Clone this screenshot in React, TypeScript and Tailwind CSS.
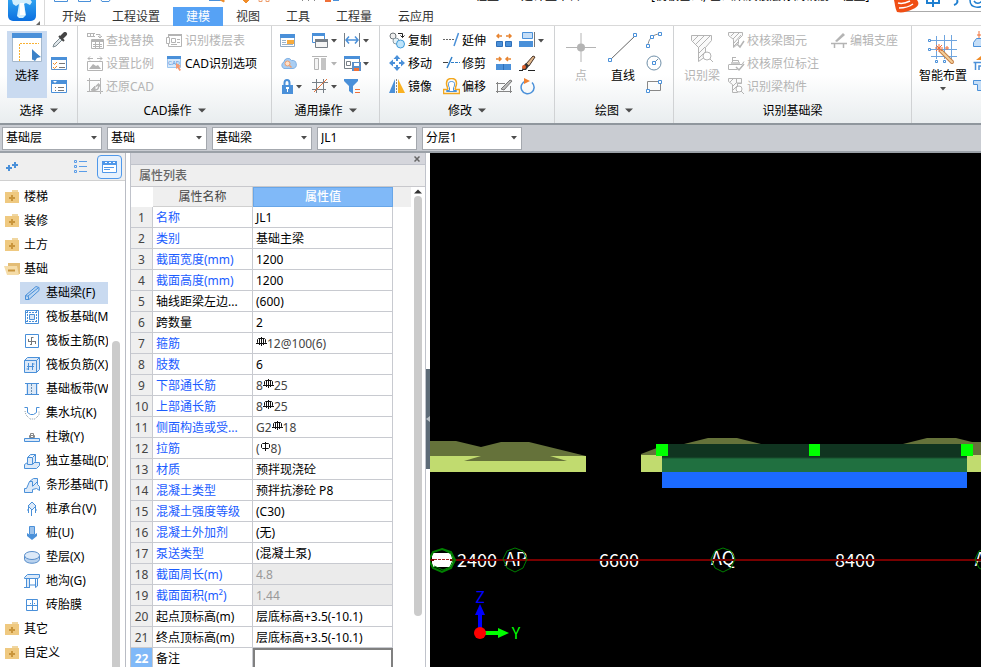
import React from 'react';

interface IconProps {
  children: React.ReactNode;
  w?: number;
  h?: number;
}

const BLUE = '#4a90d9';
const GRAY = '#b4b4b4';
const ORANGE = '#f08c28';

function Icon({ children, w = 17, h = 17 }: IconProps) {
  return (
    <svg width={w} height={h} viewBox={`0 0 ${w} ${h}`} fill="none" className="shrink-0" aria-hidden="true">
      {children}
    </svg>
  );
}

function Caret({ color = '#4d4d4d', big = false }: { color?: string; big?: boolean }) {
  return big ? (
    <svg width="8" height="5" viewBox="0 0 8 5" className="shrink-0" aria-hidden="true">
      <path d="M0 0.5h8L4 4.5z" fill={color} />
    </svg>
  ) : (
    <svg width="6" height="4" viewBox="0 0 6 4" className="shrink-0" aria-hidden="true">
      <path d="M0 0h6L3 3.5z" fill={color} />
    </svg>
  );
}

/* ---------- ribbon icons ---------- */

const icons: Record<string, React.ReactNode> = {
  dropper: (
    <Icon>
      <path d="M2 15L3 12L9 6L11 8L5 14z" fill="#dfe6ea" stroke="#7c8a90" />
      <path d="M8 4L13 9M10 6L14 2" stroke="#454545" strokeWidth="2" />
      <path d="M11 5L14 2" stroke="#454545" strokeWidth="4" strokeLinecap="round" />
    </Icon>
  ),
  checkList: (
    <Icon>
      <path d="M0.5 2.5h15v12h-15z" fill="#fff" stroke="#5a8fcb" />
      <path d="M0 2h16v3H0z" fill={BLUE} />
      <path d="M2 8l1.5 1.5L6 7M2 12l1.5 1.5L6 11" stroke={ORANGE} />
      <path d="M8 8.5h6M8 12.5h6" stroke="#777" />
    </Icon>
  ),
  listPanel: (
    <Icon>
      <path d="M0.5 2.5h15v12h-15z" fill="#fff" stroke={BLUE} />
      <path d="M0 2h16v4H0z" fill={BLUE} />
      <path d="M2 3h4l-2 2z" fill="#fff" />
      <path d="M4 9.5h1M7 9.5h6M4 12.5h1M7 12.5h6" stroke="#777" />
    </Icon>
  ),
  findReplace: (
    <Icon>
      <path d="M0.5 1v4M3.5 1v4M6.5 1v4M0 1.5h8M0 4.5h8" stroke={GRAY} />
      <path d="M9 2.5h4v3M11 4l2 2 2-2" stroke={GRAY} />
      <path d="M4.5 7.5h12v9h-12z" fill="#fff" stroke={GRAY} />
      <path d="M5 8h11v2H5z" fill={GRAY} />
      <path d="M6 12.5h9M6 14.500h9" stroke={GRAY} />
      <path d="M8.500 10v6M12.500 10v6" stroke={GRAY} />
    </Icon>
  ),
  scale: (
    <Icon>
      <path d="M1 3.500h5M3 1.500l-2 2 2 2M10 3.500h5M13 1.500l2 2-2 2" stroke={GRAY} />
      <path d="M0.500 6.500h15v9h-15z" fill="#fff" stroke={GRAY} />
      <path d="M2 14l4-5 3 2 2-1 3 4z" fill={GRAY} />
    </Icon>
  ),
  restore: (
    <Icon>
      <path d="M2.500 2.500h11v11h-11zM0 2.500h3M2.500 0v3M13.500 0v3M14 13.500h2M13.500 14v2M0 13.500h3" stroke={GRAY} />
      <path d="M8 12c3 0 4-2 3.500-5.500M9 8.500l2.500-2.500 2 2.500" stroke={GRAY} strokeWidth="1.500" />
      <path d="M4 12l4-4v5z" fill={GRAY} stroke={GRAY} />
    </Icon>
  ),
  floorTable: (
    <Icon>
      <path d="M2.500 2.500h13v12h-13z" fill="#fff" stroke={GRAY} />
      <path d="M2 2h14v2H2z" fill={GRAY} />
      <path d="M0.500 5.500h3v6h-3zM5.500 6.500h4v4h-4z" fill="#fff" stroke={GRAY} />
      <path d="M11 7.500h3M11 10.500h3M5 12.500h6" stroke={GRAY} />
    </Icon>
  ),
  cadOption: (
    <Icon>
      <path d="M1.500 1.500h13v11h-13z" fill="#d7e9fb" stroke="#9cc6f0" />
      <path d="M1 1h14v3H1z" fill={BLUE} />
      <text x="2" y="10" fontSize="6" fill={BLUE} fontFamily="Roboto, sans-serif">CAD</text>
      <path d="M10 8l5 3-2 1 2 3-1.500 1-2-3-1.500 1z" fill="#f59a73" />
    </Icon>
  ),
  formPanel: (
    <Icon>
      <path d="M0.500 2.500h14v12h-14z" fill="#fff" stroke="#8fa9c4" />
      <path d="M0 2h15v4H0z" fill={BLUE} />
      <path d="M2 8.500h4M2 10.500h4M2 12.500h11M8 8.500h5" stroke="#9cb3c9" />
      <path d="M7 8h7v4H7z" fill="#f8ab3c" />
    </Icon>
  ),
  cloud: (
    <Icon>
      <path d="M4 13.500a3.500 3.500 0 010-6.500 4 4 0 017.500-1.500 4 4 0 011.500 8z" fill="#a9cdf2" stroke="#7fb0e4" />
      <circle cx="7.500" cy="8.500" r="2.500" fill="#ffe1c9" stroke="#ee9d6c" />
      <path d="M9.500 10.500l2 2" stroke="#ee9d6c" strokeWidth="1.500" />
    </Icon>
  ),
  lock: (
    <Icon w={14}>
      <path d="M4.500 8V5a2.500 3 0 015 0v3" stroke={BLUE} strokeWidth="2" />
      <path d="M2 7h11v9H2z" fill={BLUE} />
      <path d="M7 10h1v4H7z" fill="#fff" />
      <path d="M6 9h3v2H6z" fill="#fff" />
    </Icon>
  ),
  windows: (
    <Icon>
      <path d="M0.500 1.500h12v9h-12z" fill="#fff" stroke={BLUE} />
      <path d="M0 1h13v3H0z" fill={BLUE} />
      <path d="M3.500 7.500h12v8h-12z" fill="#f5f5f5" stroke="#777f87" />
      <path d="M3 7h13v3H3z" fill="#777f87" />
    </Icon>
  ),
  alignTop: (
    <Icon>
      <path d="M0 1.500h15" stroke={GRAY} />
      <path d="M2.500 3.500h4v11h-4z" fill="#f4f4f4" stroke={GRAY} />
      <path d="M9 3h5v12H9z" fill="#c4c4c4" />
    </Icon>
  ),
  gridOff: (
    <Icon>
      <path d="M0 4.500h16M0 11.500h14M4.500 1v14M11.500 1v14" stroke="#777f87" />
      <path d="M2 14L15 1" stroke="#e8753a" />
    </Icon>
  ),
  measure: (
    <Icon>
      <path d="M0.500 1v14M15.500 1v14" stroke="#777f87" />
      <path d="M2 8h12M5 4.500L2 8l3 3.500M11 4.500L14 8l-3 3.500" stroke={BLUE} strokeWidth="1.500" />
    </Icon>
  ),
  savePanel: (
    <Icon>
      <path d="M0.500 1.500h15v12h-15z" fill="#fff" stroke="#777f87" />
      <path d="M0 1h16v3H0z" fill={BLUE} />
      <path d="M2.500 6.500h4v4h-4z" stroke="#777f87" />
      <path d="M8 7h9v9H8z" fill="#5a8fcb" />
      <path d="M10 8h5v3h-5z" fill="#fff" />
      <path d="M10 13h5v3h-5z" fill="#f07038" />
    </Icon>
  ),
  filter: (
    <Icon>
      <path d="M0 1h14v2L9 8v8l-4-3V8L0 3z" fill={BLUE} />
      <path d="M11 11.500h5M11 14.500h5" stroke="#f07038" />
    </Icon>
  ),
  copy: (
    <Icon>
      <circle cx="4" cy="4" r="3" fill="#eee" stroke="#6d7478" />
      <circle cx="7" cy="9" r="3" fill="#e6f2f8" stroke="#8a9ba4" />
      <circle cx="11.500" cy="12" r="4" fill="#bfe4fa" stroke="#3f9bd8" />
      <path d="M9 1.500h4.500v4M11.500 3.500l2 2 2-2" stroke="#222" />
    </Icon>
  ),
  move: (
    <Icon>
      <path d="M8 0l3.500 4h-7zM8 16l3.500-4h-7zM0 8l4-3.500v7zM16 8l-4-3.500v7z" fill={BLUE} />
      <path d="M8 3v3M8 10v3M3 8h3M10 8h3" stroke={BLUE} strokeWidth="2" />
    </Icon>
  ),
  mirror: (
    <Icon>
      <path d="M6 1v14H0z" fill={BLUE} />
      <path d="M9 1v14h7z" fill="#f9b122" />
      <path d="M7.500 1v14" stroke="#888" strokeDasharray="2 1" />
    </Icon>
  ),
  extend: (
    <Icon>
      <path d="M15.500 1L11 14" stroke={BLUE} strokeWidth="1.500" />
      <path d="M0 7.500h12" stroke="#666" strokeDasharray="2 1" />
    </Icon>
  ),
  trim: (
    <Icon>
      <path d="M9 2L4 13" stroke="#2f7fc8" strokeWidth="1.500" />
      <path d="M0 7.500h5" stroke="#444" />
      <path d="M8 7.500h9" stroke="#2f7fc8" strokeDasharray="3 1" />
    </Icon>
  ),
  offset: (
    <Icon>
      <path d="M0.500 15.500h16v-4h-4c-1-1 1-3 1-6 0-3-2-5-5-5s-5 2-5 5c0 3 2 5 1 6h-4z" stroke="#f2a71e" strokeWidth="1.500" />
      <path d="M3.500 13.500h10v-1h-3v-3c1-1 1-2 1-4 0-1-1-2-3-2s-3 1-3 2c0 2 0 3 1 4v3h-3z" fill="#fff" stroke={BLUE} />
    </Icon>
  ),
  breakOut: (
    <Icon>
      <path d="M0.500 9.500h6v5h-6zM9.500 9.500h6v5h-6z" fill={BLUE} stroke="#2f6fb8" />
      <path d="M1 4h5M3 2L1 4l2 2M10 4h5M13 2l2 2-2 2" stroke="#e88430" strokeWidth="1.500" />
    </Icon>
  ),
  merge: (
    <Icon>
      <path d="M0 9h15v6H0z" fill={BLUE} />
      <path d="M7.500 9v6" stroke="#2f6fb8" />
      <path d="M0 4h5M3 2l2 2-2 2M10 4h5M12 2l-2 2 2 2" stroke="#e88430" strokeWidth="1.500" />
    </Icon>
  ),
  edit: (
    <Icon>
      <path d="M0 5.500h9M0 13.500h16M1.500 4v11M14.500 8v7" stroke="#858585" />
      <path d="M5 11L14 2l2 1-8 9z" fill="#bbb" stroke="#777" />
    </Icon>
  ),
  align: (
    <Icon>
      <path d="M3.500 0.500h10v6h-10z" fill="#c5def7" stroke={BLUE} />
      <path d="M0 9h14v6H0z" fill={BLUE} />
      <path d="M15.500 0v15" stroke="#777" />
    </Icon>
  ),
  brush: (
    <Icon>
      <path d="M7 9L14 1l2 1-6 9z" fill="#e2b88c" stroke="#4a3428" />
      <path d="M7 8l3 3-3 4H3l1-4z" fill="#333" />
      <circle cx="5" cy="12" r="2" fill="#e0602c" />
      <path d="M0 15.500h4M9 15.500h7" stroke="#222" />
    </Icon>
  ),
  rotate: (
    <Icon>
      <path d="M7 3a6.500 6.500 0 106 1.500" stroke={BLUE} strokeWidth="1.500" />
      <path d="M5 0l6 3-6 3z" fill="#f08030" />
    </Icon>
  ),
  arc: (
    <Icon>
      <path d="M2 14C2 7 7 2 14 2" stroke="#888" />
      <path d="M0.500 12.500h3v3h-3zM4.500 3.500h3v3h-3zM12.500 0.500h3v3h-3z" fill="#fff" stroke={BLUE} />
    </Icon>
  ),
  circle: (
    <Icon>
      <circle cx="8" cy="8" r="7" stroke="#6f8fa8" />
      <path d="M8 8l4-4" stroke="#6f8fa8" />
      <path d="M6.500 6.500h3v3h-3z" fill="#fff" stroke={BLUE} />
    </Icon>
  ),
  rect: (
    <Icon>
      <path d="M1.500 3.500h13v9h-13z" stroke="#888" />
      <path d="M0.500 11.500h3v3h-3zM12.500 2.500h3v3h-3z" fill="#fff" stroke={BLUE} />
    </Icon>
  ),
  checkBeam: (
    <Icon>
      <path d="M0.500 0.500h14v3l-4 4v4l-5 4V7.500l-5-4z" fill="#fafafa" stroke={GRAY} />
      <path d="M3 4l3-3M5 7l6-6M6 11l7-8M6 14l4-4" stroke={GRAY} />
      <path d="M9 12l3 3 4-6" stroke={GRAY} strokeWidth="1.500" />
    </Icon>
  ),
  checkLabel: (
    <Icon>
      <path d="M1 9.500h13l2-3M0.500 9.500v5h9M4.500 9V2M4.500 5.500h6v4M4 2.500h4" stroke={GRAY} />
      <path d="M3 7h9v2H3z" fill="#ccc" />
      <path d="M8 12l3 3 5-6" stroke={GRAY} strokeWidth="1.500" />
    </Icon>
  ),
  beamPart: (
    <Icon>
      <path d="M0.500 0.500h13v5h-4v9h-5v-8l-4-3z" fill="#fafafa" stroke={GRAY} />
      <path d="M2 4l3-3M5 8l4-4M5 12l4-4M8.500 1v4h5" stroke={GRAY} />
      <circle cx="11" cy="11" r="3" fill="#fff" stroke={GRAY} />
      <path d="M13 13l3 3" stroke={GRAY} />
    </Icon>
  ),
  support: (
    <Icon>
      <path d="M4 9l8-8 2 2-8 7z" fill={GRAY} />
      <path d="M0 11.500h16M3.500 12v4M12.500 12v4" stroke={GRAY} strokeWidth="1.500" />
    </Icon>
  ),
};

interface ToolProps {
  icon: string;
  label?: string;
  name?: string;
  disabled?: boolean;
  caret?: boolean;
}

function Tool({ icon, label, name, disabled = false, caret = false }: ToolProps) {
  return (
    <button
      type="button"
      aria-label={label ?? name}
      disabled={disabled}
      className={`flex h-[23px] items-center gap-0.5 whitespace-nowrap ${disabled ? 'text-[#b4b4b4]' : 'text-black'}`}
    >
      {icons[icon]}
      {label}
      {caret && <Caret color={disabled ? '#b4b4b4' : '#4d4d4d'} />}
    </button>
  );
}

interface GroupProps {
  title: string;
  width: string;
  caret?: boolean;
  children: React.ReactNode;
}

function Group({ title, width, caret = true, children }: GroupProps) {
  return (
    <section className={`flex shrink-0 flex-col border-r border-[#d0d2d4] pt-[3px] ${width}`}>
      <div className="flex h-[69px]">{children}</div>
      <button type="button" className="flex h-[26px] items-center justify-center gap-1.5">
        {title}
        {caret && <Caret big />}
      </button>
    </section>
  );
}

const tabs = ['开始', '工程设置', '建模', '视图', '工具', '工程量', '云应用'];

function Header() {
  return (
    <header className="relative flex h-[26px] shrink-0 overflow-hidden bg-white">
      <div className="relative w-[45px] shrink-0 border-r border-b border-[#d9d9d9]">
        <svg width="44" height="26" viewBox="0 0 44 26" aria-hidden="true">
          <defs>
            <linearGradient id="logo" x1="0" y1="0" x2="0" y2="1">
              <stop offset="0" stopColor="#3db4f5" />
              <stop offset="1" stopColor="#0b6fe0" />
            </linearGradient>
          </defs>
          <rect x="8" y="-8" width="28" height="29" rx="5" fill="url(#logo)" />
          <path d="M12 0l5-2h12l3 4-2 3-4-2-2 1 2 11-3 3h-4l-2-2 2-12-3 2-3-2z" fill="#d3effd" />
          <path d="M20 3h4l1 12h-5z" fill="#fff" />
          <path d="M40 21v4h-4z" fill="#666" />
        </svg>
      </div>
      <div className="flex flex-1 flex-col border-b border-[#d9d9d9]">
        <div className="flex h-[7px] shrink-0 items-start overflow-hidden text-xs leading-none text-black">
          <svg width="310" height="4" viewBox="0 0 310 4" aria-hidden="true" fill="none">
            <path d="M9.500 0v1.500h13V0M33.500 0v1.500h12V0M56 0l1 1.500h7L65 0" stroke={BLUE} />
            <path d="M164 0h13v1h-13z" fill={BLUE} />
            <path d="M175 0l4 2V0M198 0l3 3 3-3" fill={ORANGE} stroke={ORANGE} />
            <path d="M214 0v1.500h3V0M221 0v1.500h3V0" stroke="#ee9d6c" />
            <path d="M257.500 0v1M263.500 0v1M269.500 0v1" stroke="#888" />
            <path d="M280 0h6v2h-6z" fill="#f07038" />
            <path d="M288 0h6v1h-6z" fill={BLUE} />
          </svg>
          <span className="-mt-2.5 ml-[108px] whitespace-nowrap">工程量 - 土建计量平台</span>
          <span className="-mt-2.5 ml-[70px] whitespace-nowrap">[筏板基础, 基础梁及楼层标高钢筋工程量]</span>
        </div>
        <nav className="flex flex-1 pl-1">
          {tabs.map((tab) => (
            <button
              key={tab}
              type="button"
              className={`px-[13px] pt-px leading-[18px] ${tab === '建模' ? 'bg-[#56a2f5] text-white' : 'text-[#333]'}`}
            >
              {tab}
            </button>
          ))}
        </nav>
      </div>
      {/* Floating input-method bar */}
      <svg className="absolute top-0 right-0" width="88" height="14" viewBox="0 0 88 14" fill="none" aria-hidden="true">
        <path d="M6 11.500h82" stroke="#aaa" />
        <path d="M1 0h23c3 4 1 7-4 9-6 3-11 4-16 3C2 8 2 4 1 0z" fill="#f04e14" />
        <path d="M5 3c4 1 8 0 12-2M6 8c5 0 10-1 14-4" stroke="#fff" strokeWidth="1.500" />
        <path d="M34 0v3h12V0M40 0v7" stroke="#1e7fd0" strokeWidth="2" />
        <path d="M64 0c1 2 0 4-3 5" stroke="#1e7fd0" strokeWidth="2" />
        <path d="M77 0c0 9 11 9 16 3M81 1c2 3 5 3 8 0" stroke="#1e7fd0" strokeWidth="1.500" />
      </svg>
    </header>
  );
}

function Ribbon() {
  return (
    <div className="flex h-[97px] shrink-0 overflow-hidden bg-linear-to-b from-white from-50% to-[#e9edef]">
      <Group title="选择" width="w-[78px]">
        <button type="button" className="ml-[7px] mt-0.5 flex h-[67px] w-10 flex-col items-center gap-[3px] bg-[#c9daf0]">
          <Icon w={30} h={34}>
            <path d="M0.500 3.500h29v27h-29z" fill="#fff" stroke="#a5b8cc" />
            <path d="M0 2h30v5H0z" fill={BLUE} />
            <path d="M7.500 30V12.500H27" stroke="#f8b133" strokeDasharray="2 1" />
            <path d="M20 19l9 7-4 1-2 3-3-2z" fill="#3b82c8" />
            <path d="M20 18v11l3-3h5z" fill="#3b82c8" />
          </Icon>
          选择
        </button>
        <div className="ml-1">
          <Tool icon="dropper" name="拾取" />
          <Tool icon="checkList" name="批量选择" />
          <Tool icon="listPanel" name="按属性选择" />
        </div>
      </Group>
      <Group title="CAD操作" width="w-[194px]">
        <div className="ml-[9px]">
          <Tool icon="findReplace" label="查找替换" disabled />
          <Tool icon="scale" label="设置比例" disabled />
          <Tool icon="restore" label="还原CAD" disabled />
        </div>
        <div className="ml-3">
          <Tool icon="floorTable" label="识别楼层表" disabled />
          <Tool icon="cadOption" label="CAD识别选项" />
        </div>
      </Group>
      <Group title="通用操作" width="w-[108px]">
        <div className="ml-2 w-8">
          <Tool icon="formPanel" name="图元存盘" />
          <Tool icon="cloud" name="云检查" />
          <Tool icon="lock" name="锁定" caret />
        </div>
        <div className="w-8">
          <Tool icon="windows" name="复制到其它层" caret />
          <Tool icon="alignTop" name="对齐" disabled caret />
          <Tool icon="gridOff" name="辅轴" caret />
        </div>
        <div>
          <Tool icon="measure" name="长度标注" caret />
          <Tool icon="savePanel" name="保存" caret />
          <Tool icon="filter" name="过滤" />
        </div>
      </Group>
      <Group title="修改" width="w-[175px]">
        <div className="ml-[9px] w-[54px]">
          <Tool icon="copy" label="复制" />
          <Tool icon="move" label="移动" />
          <Tool icon="mirror" label="镜像" />
        </div>
        <div className="w-[53px]">
          <Tool icon="extend" label="延伸" />
          <Tool icon="trim" label="修剪" />
          <Tool icon="offset" label="偏移" />
        </div>
        <div className="w-[23px]">
          <Tool icon="breakOut" name="打断" />
          <Tool icon="merge" name="合并" />
          <Tool icon="edit" name="分割" />
        </div>
        <div>
          <Tool icon="align" name="对齐图元" caret />
          <Tool icon="brush" name="格式刷" />
          <Tool icon="rotate" name="旋转" />
        </div>
      </Group>
      <Group title="绘图" width="w-[119px]">
        <button type="button" disabled className="ml-[11px] mt-0.5 flex h-[67px] w-[30px] flex-col items-center gap-[3px] text-[#b4b4b4]">
          <Icon w={30} h={34}>
            <path d="M15 2v29M0 16.500h30" stroke={GRAY} />
            <circle cx="15" cy="16.500" r="4" fill={GRAY} />
          </Icon>
          点
        </button>
        <button type="button" className="ml-3 mt-0.5 flex h-[67px] w-[30px] flex-col items-center gap-[3px]">
          <Icon w={30} h={34}>
            <path d="M2 29L28 4" stroke="#666" />
            <path d="M0.500 27.500h3v3h-3zM25.500 2.500h3v3h-3z" fill="#fff" stroke={BLUE} />
          </Icon>
          直线
        </button>
        <div className="ml-2">
          <Tool icon="arc" name="弧线" />
          <Tool icon="circle" name="圆" />
          <Tool icon="rect" name="矩形" />
        </div>
      </Group>
      <Group title="识别基础梁" width="w-[238px]" caret={false}>
        <button type="button" disabled className="ml-2.5 mt-0.5 flex h-[67px] w-9 flex-col items-center gap-[3px] text-[#b4b4b4]">
          <Icon w={26} h={34}>
            <path d="M2.500 4.500h20v5l-6 7v9l-7 5v-14l-7-7z" fill="#fafafa" stroke={GRAY} />
            <path d="M4 10l5-5M7 13l8-8M9 17L21 5M10 22l6-6M10 27l6-6" stroke={GRAY} />
            <circle cx="18" cy="25" r="4" fill="#fff" stroke={GRAY} />
            <path d="M21 28l3 3" stroke={GRAY} />
          </Icon>
          识别梁
        </button>
        <div className="ml-2">
          <Tool icon="checkBeam" label="校核梁图元" disabled />
          <Tool icon="checkLabel" label="校核原位标注" disabled />
          <Tool icon="beamPart" label="识别梁构件" disabled />
        </div>
        <div className="ml-3">
          <Tool icon="support" label="编辑支座" disabled />
        </div>
      </Group>
      <section className="flex flex-1 pt-[5px]">
        <button type="button" className="ml-[7px] flex h-[67px] w-12 shrink-0 flex-col items-center gap-[3px]">
          <Icon w={32} h={34}>
            <path d="M4 9.500h26M4 18.500h26M4 25.500h26M9.500 28V5M17.500 28V4M24.500 28V4" stroke="#6fa5df" />
            <path d="M1.500 8.500h2v2h-2zM1.500 17.500h2v2h-2zM8.500 29.500h2v2h-2zM16.500 29.500h2v2h-2z" fill="#fff" stroke={BLUE} />
            <path d="M14 20l11 11" stroke="#c58047" strokeWidth="4" strokeLinecap="round" />
            <path d="M14 20l11 11" stroke="#f5cf9a" strokeWidth="2" strokeLinecap="round" />
            <path d="M12 13v8M8 17h8M9 14l6 6M15 14l-6 6M20 15v4M18 17h4" stroke="#f07038" />
          </Icon>
          <span className="whitespace-nowrap">智能布置</span>
          <Caret />
        </button>
        <div className="ml-1.5 shrink-0">
          <div className="h-[23px]">
            <Icon h={20}>
              <path d="M6 0v8M4 4h6" stroke="#f07038" />
              <path d="M0.500 15.500v-4l3-4h12v8z" fill="#c5def7" stroke={BLUE} />
            </Icon>
          </div>
          <div className="h-[23px]">
            <Icon h={20}>
              <path d="M3 6l5-4 5 4z" fill="#f08c28" />
              <path d="M0.500 8.500h15M2.500 9v7M6 16v-4h6" stroke={BLUE} strokeWidth="1.500" />
            </Icon>
          </div>
          <Icon h={20}>
            <path d="M0.500 3.500h15v4h-3v6h-8v-6h-4z" fill="#c5def7" stroke={BLUE} />
          </Icon>
        </div>
      </section>
    </div>
  );
}

const selectors = [
  { name: '楼层', value: '基础层' },
  { name: '构件类别', value: '基础' },
  { name: '构件类型', value: '基础梁' },
  { name: '构件', value: 'JL1' },
  { name: '分层', value: '分层1' },
];

function SelectorBar() {
  return (
    <div className="flex h-[30px] shrink-0 items-center gap-[5px] border-y-2 border-t-[#8f969d] border-b-[#9ba1a8] bg-[#c9ccd2] px-0.5">
      {selectors.map((s) => (
        <label key={s.name} className="relative flex h-[23px] w-[100px] items-center border border-[#a4a8ae] bg-white">
          <select aria-label={s.name} className="h-full w-full appearance-none pl-[3px] text-black outline-none">
            <option>{s.value}</option>
          </select>
          <span className="pointer-events-none absolute right-1">
            <Caret />
          </span>
        </label>
      ))}
    </div>
  );
}

/* ---------- component tree ---------- */

const LIGHT = '#dce9f8';

const treeIcons: Record<string, React.ReactNode> = {
  beam: <path d="M1.500 14.500v-4L12 1.500l3 1v3L5 14.500zM4 11L14 3M1.500 10.500l3 1v3" fill="#bcd6f2" stroke={BLUE} />,
  raft: (
    <g stroke={BLUE}>
      <path d="M1.500 1.500h13v13h-13z" fill="#fff" />
      <path d="M5.500 5.500h5v5h-5z" fill={LIGHT} />
      <path d="M3.500 2v12M12.500 2v12M2 3.500h12M2 12.500h12" strokeDasharray="2 1" />
    </g>
  ),
  mainBar: (
    <g>
      <path d="M1.500 1.500h13v13h-13z" fill="#fff" stroke={BLUE} />
      <path d="M7.500 4v8M4 8.500h8M7.500 4.500h2M6 11.500h2M4.500 6v2M11.500 8v3" stroke="#777" />
    </g>
  ),
  negBar: (
    <g stroke={BLUE}>
      <path d="M0.500 3.500l3-3h12v12l-3 3h-12z" fill={LIGHT} />
      <path d="M0.500 3.500h12v12M12.500 3.500l3-3M4.500 6v7M8.500 6v7M3 9.500h7M2.500 12h2M8.500 7h2" />
    </g>
  ),
  strip: (
    <g>
      <path d="M2 3h12v10H2z" fill={LIGHT} />
      <path d="M1 2.500h14M1 13.500h14M3.500 3v10M12.500 3v10" stroke={BLUE} />
      <path d="M7.500 3v10" stroke="#6b8fae" strokeDasharray="2 1" />
    </g>
  ),
  pit: (
    <g>
      <path d="M0.500 2.500h3v5l3 2h3l3-2v-5h3" stroke={BLUE} />
      <path d="M1 6l1 4 4 4h5l4-4V6" stroke="#8a9aa6" strokeDasharray="1 1" />
    </g>
  ),
  pier: (
    <g>
      <path d="M6.500 4.500h3v4h-3zM5.500 6.500h5v2h-5z" stroke="#888" />
      <path d="M0.500 9.500h15v3h-15z" fill={LIGHT} stroke={BLUE} />
    </g>
  ),
  footing: (
    <g stroke={BLUE} fill={LIGHT}>
      <path d="M0.500 11.500l3-2h12v3l-3 3h-12z" />
      <path d="M3.500 9.500v-5l3-3h5v7l-3 3h-5zM3.500 4.500h5l3-3M8.500 5v6" />
    </g>
  ),
  stripFooting: (
    <g stroke={BLUE} fill={LIGHT}>
      <path d="M0.500 15.500v-4h2l3-7 4-3h4v6l2 2v4l-3-2-4 1v3zM5.500 4.500h3v5M9 9l4-4" />
    </g>
  ),
  cap: (
    <g stroke={BLUE} fill={LIGHT}>
      <path d="M8 1l4 4-4 4-4-4zM4.500 6v6M7.500 9v6M11.500 6v6M3 9h2M11 9h2" />
    </g>
  ),
  pile: (
    <g>
      <path d="M5.500 1.500h5v8h-5z" fill="#9cc2eb" stroke={BLUE} />
      <path d="M3 8v3l5 4 5-4V8l-3 2H6z" fill={BLUE} />
    </g>
  ),
  cushion: (
    <g stroke="#5a8fcb" fill={LIGHT}>
      <path d="M0.500 6.500v4c1 5 14 5 15 0v-4" fill="#b9d2ee" />
      <ellipse cx="8" cy="6.500" rx="7.500" ry="4" />
    </g>
  ),
  trench: (
    <g stroke={BLUE} fill={LIGHT}>
      <path d="M0.500 4.500l3-3h12v3l-2 1h-13zM2.500 5.500v9h3v-9M11.500 5.500v9M13.500 5v8l-2 1.500M0 14.500h6M5.500 12h6" />
    </g>
  ),
  brick: (
    <g>
      <path d="M2.500 2.500h11v11h-11zM8.500 3v10M3 8.500h10" stroke={BLUE} />
      <path d="M6 6h1v1H6zM10 6h1v1h-1z" fill={BLUE} />
    </g>
  ),
};

const foundation = [
  { icon: 'beam', label: '基础梁(F)' },
  { icon: 'raft', label: '筏板基础(M)' },
  { icon: 'mainBar', label: '筏板主筋(R)' },
  { icon: 'negBar', label: '筏板负筋(X)' },
  { icon: 'strip', label: '基础板带(W)' },
  { icon: 'pit', label: '集水坑(K)' },
  { icon: 'pier', label: '柱墩(Y)' },
  { icon: 'footing', label: '独立基础(D)' },
  { icon: 'stripFooting', label: '条形基础(T)' },
  { icon: 'cap', label: '桩承台(V)' },
  { icon: 'pile', label: '桩(U)' },
  { icon: 'cushion', label: '垫层(X)' },
  { icon: 'trench', label: '地沟(G)' },
  { icon: 'brick', label: '砖胎膜' },
];

function Folder({ label, open = false }: { label: string; open?: boolean }) {
  return (
    <li>
      <button type="button" className="flex h-6 items-center gap-1 pl-1">
        <Icon w={16} h={16}>
          {open ? (
            <>
              <path d="M4 2h12v11H4z" fill="#e3bd76" />
              <path d="M0 5h13l2 9H3z" fill="#f5dca8" />
              <path d="M4 9.500h7" stroke="#c9953c" strokeWidth="2" />
            </>
          ) : (
            <>
              <path d="M8 1h6v3H8z" fill="#f0d6a0" />
              <path d="M1 3h14v11H1z" fill="#efc980" />
              <path d="M8 6v6M5 9h6" stroke="#c9953c" strokeWidth="2" />
            </>
          )}
        </Icon>
        {label}
      </button>
    </li>
  );
}

function TreePanel() {
  return (
    <aside className="flex w-[126px] shrink-0 flex-col border-r border-[#b9bcc4] bg-white">
      <div className="flex h-7 shrink-0 items-center border-b border-[#d0d0d0] bg-[#efefef] pl-1.5 pr-[3px]">
        <button type="button" aria-label="展开">
          <Icon w={14} h={14}>
            <path d="M3 5v6M0 8h6M9 2v6M6 5h6" stroke={BLUE} strokeWidth="2" />
          </Icon>
        </button>
        <button type="button" aria-label="列表" className="mr-2 ml-auto">
          <Icon w={15} h={16}>
            <path d="M0.500 1.500h2v2h-2zM0.500 6.500h2v2h-2zM0.500 11.500h2v2h-2zM5 2.500h8M5 7.500h8M5 12.500h8" stroke="#5a9de8" />
          </Icon>
        </button>
        <button
          type="button"
          aria-label="面板"
          className="flex h-6 w-[25px] items-center justify-center rounded border border-[#4f98ea] bg-[#e6f1fd]"
        >
          <Icon w={17} h={16}>
            <path d="M1.500 2.500h14v11h-14z" fill="#fff" stroke="#4f98ea" />
            <path d="M1 2h15v4H1z" fill="#4f98ea" />
            <path d="M4 3.500h2M8 3.500h2M12 3.500h2" stroke="#fff" />
            <path d="M3 8.500h10M3 10.500h6" stroke="#4f98ea" />
          </Icon>
        </button>
      </div>
      <div className="flex min-h-0 flex-1 gap-1 pt-1">
        <ul className="w-[108px] shrink-0 overflow-hidden whitespace-nowrap">
          <Folder label="楼梯" />
          <Folder label="装修" />
          <Folder label="土方" />
          <Folder label="基础" open />
          {foundation.map((f) => (
            <li key={f.label} className="flex h-6 items-center pl-5">
              <button
                type="button"
                className={`flex h-[22px] w-full items-center gap-1.5 pl-1 ${f.icon === 'beam' ? 'bg-[#c9daf0]' : ''}`}
              >
                <Icon w={16} h={16}>{treeIcons[f.icon]}</Icon>
                {f.label}
              </button>
            </li>
          ))}
          <Folder label="其它" />
          <Folder label="自定义" />
        </ul>
        <div className="mt-[156px] w-2 rounded-t bg-[#cbcbcb]" />
      </div>
    </aside>
  );
}

/* ---------- property table ---------- */

// Rebar grade mark: circle with one or three strokes
function Rebar({ plain = false }: { plain?: boolean }) {
  return (
    <svg width="11" height="11" viewBox="0 0 11 11" fill="none" stroke="#111" className="-mt-1 inline align-baseline" aria-hidden="true">
      <path d="M2.500 1.500h6l1 1v3l-1 1h-6l-1-1v-3zM5.500 0v9" />
      {!plain && <path d="M3.500 1v7M7.500 1v7M0 6.500h11" />}
    </svg>
  );
}

interface Row {
  name: string;
  value: React.ReactNode;
  plain?: boolean;
  locked?: boolean;
}

const rows: Row[] = [
  { name: '名称', value: 'JL1' },
  { name: '类别', value: '基础主梁' },
  { name: '截面宽度(mm)', value: '1200' },
  { name: '截面高度(mm)', value: '1200' },
  { name: '轴线距梁左边...', value: '(600)', plain: true },
  { name: '跨数量', value: '2', plain: true },
  { name: '箍筋', value: <span className="text-[#444]"><Rebar />12@100(6)</span> },
  { name: '肢数', value: '6' },
  { name: '下部通长筋', value: <span className="text-[#444]">8<Rebar />25</span> },
  { name: '上部通长筋', value: <span className="text-[#444]">8<Rebar />25</span> },
  { name: '侧面构造或受...', value: <span className="text-[#444]">G2<Rebar />18</span> },
  { name: '拉筋', value: <span className="text-[#444]">(<Rebar plain />8)</span> },
  { name: '材质', value: '预拌现浇砼' },
  { name: '混凝土类型', value: '预拌抗渗砼 P8' },
  { name: '混凝土强度等级', value: '(C30)' },
  { name: '混凝土外加剂', value: '(无)' },
  { name: '泵送类型', value: '(混凝土泵)' },
  { name: '截面周长(m)', value: '4.8', locked: true },
  { name: '截面面积(m²)', value: '1.44', locked: true },
  { name: '起点顶标高(m)', value: '层底标高+3.5(-10.1)', plain: true },
  { name: '终点顶标高(m)', value: '层底标高+3.5(-10.1)', plain: true },
  { name: '备注', value: '', plain: true },
];

function PropertyPanel() {
  return (
    <section className="ml-1 flex w-[296px] shrink-0 flex-col overflow-hidden border-x border-[#c0c3cb] bg-white">
      <div className="flex h-3 shrink-0 items-center justify-end border-b border-[#c0c3cb] bg-[#d5d6dc] pr-[5px]">
        <button type="button" aria-label="关闭">
          <Icon w={6} h={6}>
            <path d="M0.500 0.500l5 5M5.500 0.500l-5 5" stroke="#666" strokeWidth="1.500" />
          </Icon>
        </button>
      </div>
      <h2 className="h-[22px] shrink-0 border-b border-[#c8c8cc] bg-[#efefef] pl-2 font-medium leading-[21px] text-[#666]">
        属性列表
      </h2>
      <div className="flex min-h-0 flex-1">
        <div className="flex-1 overflow-hidden">
          <table className="w-full table-fixed border-separate border-spacing-0">
            <colgroup>
              <col className="w-[22px]" />
              <col className="w-[100px]" />
              <col className="w-[140px]" />
              <col />
            </colgroup>
            <thead>
              <tr className="h-5 leading-[18px]">
                <th className="p-0" />
                <th className="border-r border-b border-[#d0d0d0] bg-[#efefef] p-0 font-normal text-[#444]">属性名称</th>
                <th className="border border-[#68a6e8] bg-[#80b9f8] p-0 font-medium text-white">属性值</th>
                <th className="bg-[#efefef] p-0" />
              </tr>
            </thead>
            <tbody>
              {rows.map((row, index) => {
                const active = index === rows.length - 1;
                return (
                  <tr key={row.name} className="h-[21px] leading-[18px] whitespace-nowrap">
                    <td
                      className={`border-r border-b border-[#c8cad0] p-0 pt-0.5 text-center ${
                        active ? 'bg-[#80b9f8] font-bold text-white' : 'bg-[#efefef] text-[#444]'
                      }`}
                    >
                      {index + 1}
                    </td>
                    <td className={`overflow-hidden border-r border-b border-[#c8cad0] p-0 pt-0.5 pl-[3px] ${row.plain ? 'text-black' : 'text-[#1a5cff]'}`}>
                      {row.name}
                    </td>
                    {active ? (
                      <td className="border-2 border-[#808080] p-0">
                        <input aria-label={row.name} className="block h-4 w-full outline-none" />
                      </td>
                    ) : (
                      <td
                        className={`border-r border-b border-[#c8cad0] p-0 pt-0.5 pl-[3px] ${
                          row.locked ? 'bg-[#ebebeb] text-[#999]' : 'text-black'
                        }`}
                      >
                        {row.value}
                      </td>
                    )}
                    <td className="p-0" />
                  </tr>
                );
              })}
            </tbody>
          </table>
        </div>
        <div className="flex w-3.5 flex-col items-center pt-0.5">
          <svg width="8" height="5" viewBox="0 0 8 5" aria-hidden="true">
            <path d="M0 4.500h8L4 0.500z" fill="#333" />
          </svg>
          <div className="mt-0.5 h-[420px] w-2 rounded bg-[#cbcbcb]" />
        </div>
      </div>
    </section>
  );
}

/* ---------- model view ---------- */

function ModelView() {
  return (
    <main className="min-w-0 flex-1 bg-black">
      <svg width="100%" height="100%" className="block" fill="none" fontFamily="Noto Sans CJK SC, sans-serif">
        {/* Left slab */}
        <path d="M0 303h156v16H0z" fill="#c1db6f" />
        <path d="M0 288h26l25 6 20-5h28l57 14H0z" fill="#65723a" />
        <path d="M34 308l17-5h69l17 5z" fill="#65723a" />
        {/* Right slab and beam */}
        <path d="M211 301l21-8v9h-21z" fill="#65723a" />
        <path d="M211 302h21v17h-21z" fill="#c1db6f" />
        <path d="M254 291l24-6h29l24 6zM473 291l24-6h29l16 4h9v13h-14v-11z" fill="#65723a" />
        <path d="M537 302h14v17h-14z" fill="#c1db6f" />
        <path d="M232 291h305v14H232z" fill="#103420" />
        <path d="M232 305h305v14H232z" fill="#207040" />
        <path d="M232 305h305" stroke="#19502f" />
        <path d="M232 319h305v16H232z" fill="#1b6aff" />
        <path d="M226 291h12v12h-12zM379 291h11v12h-11zM531 291h12v12h-12z" fill="#00ff00" />
        {/* Axis line with dimensions */}
        <g fill="#fff" fontSize="18" textAnchor="middle">
          <text x="47" y="414">2400</text>
          <text x="189" y="414">6600</text>
          <text x="425" y="414">8400</text>
          <text x="86" y="413">AP</text>
          <text x="293" y="412">AQ</text>
          <text x="556" y="413">AR</text>
        </g>
        <path d="M3 400h18l2 3v8l-2 3H3l-1-4v-7z" fill="#fff" />
        <path d="M0 407h600" stroke="#780000" strokeWidth="2" />
        <path d="M4 407h16" stroke="#fff" strokeWidth="2" />
        <path d="M4 406.500h16" stroke="#a02020" strokeDasharray="3 1" />
        <g stroke="#008000">
          <path d="M85 395l8 3 4 8-4 9-8 4-8-4-4-9 4-8zM293 395l8 3 4 8-4 9-8 4-8-4-4-9 4-8zM557 395l-8 3-4 8 4 9 8 4" />
          <path d="M12 396l9 3 4 8-4 8-9 4-9-4-4-8 4-8z" strokeWidth="2" />
          <path d="M14 397l7 4 2 6-3 7-7 3-9-4" />
        </g>
        {/* Axis gizmo */}
        <path d="M50 480v-20" stroke="#0000ff" strokeWidth="4" />
        <path d="M45 462l5-11 5 11z" fill="#0000ff" />
        <path d="M50 480h20" stroke="#00ff00" strokeWidth="4" />
        <path d="M68 475l11 5-11 5z" fill="#00ff00" />
        <circle cx="50" cy="480" r="6" fill="#ff0000" />
        <text x="50" y="450" fontSize="16" textAnchor="middle" fill="#0000ff">Z</text>
        <text x="86" y="486" fontSize="16" textAnchor="middle" fill="#00ff00">Y</text>
      </svg>
    </main>
  );
}

export default function App() {
  return (
    <div className="flex h-screen flex-col overflow-hidden bg-white font-['Noto_Sans','Noto_Sans_CJK_SC',sans-serif] text-xs text-black">
      <Header />
      <Ribbon />
      <SelectorBar />
      <div className="flex min-h-0 flex-1">
        <TreePanel />
        <PropertyPanel />
        <button type="button" aria-label="折叠" className="mt-[216px] flex h-[100px] w-1 shrink-0 items-center bg-[#5d6b77]">
          <svg width="4" height="6" viewBox="0 0 4 6" aria-hidden="true">
            <path d="M4 0v6L0 3z" fill="#b9c0c6" />
          </svg>
        </button>
        <ModelView />
      </div>
    </div>
  );
}
